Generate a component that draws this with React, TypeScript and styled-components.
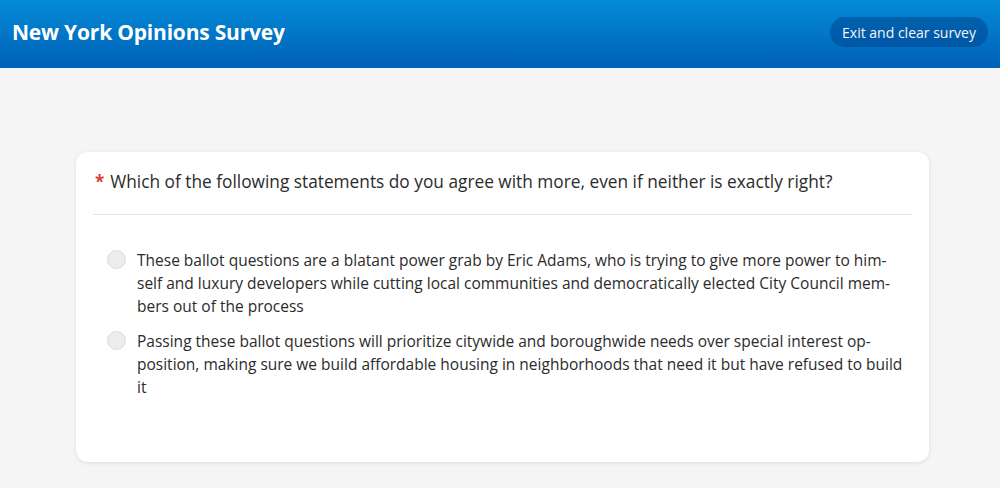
import React, { useState } from 'react';
import styled, { createGlobalStyle } from 'styled-components';

const GlobalStyle = createGlobalStyle`
  html, body {
    margin: 0;
    padding: 0;
    background: #f5f5f5;
    font-family: 'Open Sans', 'Noto Sans', sans-serif;
  }
  * { box-sizing: border-box; }
`;

const Page = styled.div`
  min-height: 488px;
  background: #f5f5f5;
`;

const Header = styled.header`
  height: 68px;
  padding: 0 12px 4px 12px;
  display: flex;
  align-items: center;
  justify-content: space-between;
  background: linear-gradient(180deg, #038bd6 0%, #0060b8 100%);
`;

const Title = styled.h1`
  margin: 0;
  font-size: 21px;
  font-weight: 700;
  color: #fff;
  letter-spacing: -0.2px;
`;

const ExitButton = styled.button`
  height: 30px;
  padding: 0 12px;
  border: none;
  border-radius: 15px;
  background: rgba(0, 60, 130, 0.45);
  color: #f2f6fb;
  font-family: inherit;
  font-size: 14px;
  cursor: pointer;
`;

const Main = styled.main`
  padding: 84px 0 26px;
  display: flex;
  justify-content: center;
`;

const Card = styled.section`
  width: 853px;
  margin-left: 5px;
  min-height: 310px;
  background: #fff;
  border-radius: 12px;
  box-shadow: 0 1px 4px rgba(0, 0, 0, 0.1);
  padding: 18px 17px 20px;
`;

const Question = styled.div`
  display: flex;
  align-items: baseline;
  gap: 6px;
  padding: 0 0 21px 2px;
  border-bottom: 1px solid #e6e6e6;
  font-size: 17.3px;
  color: #2b2b2b;
`;

const Required = styled.span`
  color: #e03a2f;
  font-weight: 700;
  font-size: 17px;
`;

const Options = styled.div`
  padding: 34px 0 0 14px;
  display: flex;
  flex-direction: column;
  gap: 12px;
`;

const Option = styled.label`
  display: flex;
  align-items: flex-start;
  gap: 11px;
  cursor: pointer;
`;

const Radio = styled.span<{ checked: boolean }>`
  flex: none;
  width: 19px;
  height: 19px;
  margin-top: 1px;
  border-radius: 50%;
  background: ${p => (p.checked ? '#0070c9' : '#ededed')};
  border: 1px solid #dcdcdc;
`;

const OptionText = styled.span`
  font-size: 15.5px;
  line-height: 23px;
  color: #2b2b2b;
  white-space: nowrap;
`;

const options = [
  [
    'These ballot questions are a blatant power grab by Eric Adams, who is trying to give more power to him-',
    'self and luxury developers while cutting local communities and democratically elected City Council mem-',
    'bers out of the process',
  ],
  [
    'Passing these ballot questions will prioritize citywide and boroughwide needs over special interest op-',
    'position, making sure we build affordable housing in neighborhoods that need it but have refused to build',
    'it',
  ],
];

const App: React.FC = () => {
  const [selected, setSelected] = useState<number | null>(null);

  return (
    <Page>
      <GlobalStyle />
      <Header>
        <Title>New York Opinions Survey</Title>
        <ExitButton>Exit and clear survey</ExitButton>
      </Header>
      <Main>
        <Card>
          <Question>
            <Required>*</Required>
            <span>Which of the following statements do you agree with more, even if neither is exactly right?</span>
          </Question>
          <Options>
            {options.map((lines, i) => (
              <Option key={i} onClick={() => setSelected(i)}>
                <Radio checked={selected === i} />
                <OptionText>
                  {lines.map((line, j) => (
                    <React.Fragment key={j}>
                      {line}
                      {j < lines.length - 1 && <br />}
                    </React.Fragment>
                  ))}
                </OptionText>
              </Option>
            ))}
          </Options>
        </Card>
      </Main>
    </Page>
  );
};

export default App;
